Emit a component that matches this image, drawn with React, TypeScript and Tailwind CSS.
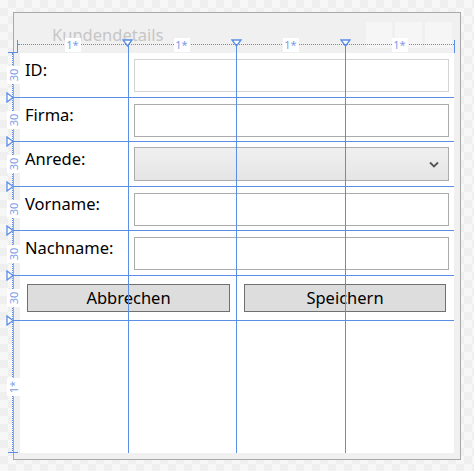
import React from "react";

const rows = ["ID:", "Firma:", "Anrede:", "Vorname:", "Nachname:"];
const blue = "#5b8ee6";

function DownTriangle() {
  return (
    <svg width="11" height="8" viewBox="0 0 11 8">
      <path d="M1 1 H10 L5.5 7 Z" fill="white" stroke={blue} strokeWidth="1.3" />
    </svg>
  );
}

function RightTriangle() {
  return (
    <svg width="8" height="11" viewBox="0 0 8 11">
      <path d="M1 1 V10 L7 5.5 Z" fill="white" stroke={blue} strokeWidth="1.3" />
    </svg>
  );
}

// one "30" or "1*" tag on the left ruler, rotated
function SideTag({ text }: { text: string }) {
  return (
    <div className="w-[18px] h-[14px] bg-white text-[11px] leading-[14px] text-center text-[#7d9ce8] -rotate-90">
      {text}
    </div>
  );
}

export default function App() {
  return (
    <div
      className="relative w-[474px] h-[471px] overflow-hidden bg-[#f7f7f7] bg-[conic-gradient(#efefef_25%,#f7f7f7_0_50%,#efefef_0_75%,#f7f7f7_0)] bg-[length:16px_16px] pl-[13px] pt-[12px]"
      style={{ fontFamily: '"Noto Sans", "Open Sans", sans-serif' }}
    >
      {/* window */}
      <div className="w-[448px] h-[448px] border border-[#a9a9a9] bg-[#f0f0f0] flex flex-col">
        <div className="h-[40px] flex shrink-0">
          <div className="pl-[38px] pt-[12px] text-[16.5px] leading-[20px] text-[#c6c6c6]">Kundendetails</div>
          <div className="ml-auto flex gap-[3px] pr-[8px] pt-[9px]">
            <div className="w-[26px] h-[26px] bg-[#f6f6f6]" />
            <div className="w-[27px] h-[26px] bg-[#f6f6f6]" />
            <div className="w-[27px] h-[26px] bg-[#f6f6f6]" />
          </div>
        </div>
        {/* client area */}
        <div className="ml-[6px] w-[434px] h-[400px] bg-white grid grid-cols-4 grid-rows-[repeat(6,44.6px)_1fr] text-[16.5px] text-black">
          {rows.map((label, i) => (
            <React.Fragment key={label}>
              <div className="col-start-1 pl-[5px] pt-[6px] leading-[22px]" style={{ gridRowStart: i + 1 }}>
                {label}
              </div>
              {label === "Anrede:" ? (
                <div
                  className="col-start-2 col-span-3 ml-[5px] mr-[5px] mt-[5px] h-[34px] border border-[#acacac] bg-gradient-to-b from-[#f0f0f0] to-[#e5e5e5] flex items-center justify-end pr-[9px]"
                  style={{ gridRowStart: i + 1 }}
                >
                  <svg width="10" height="7" viewBox="0 0 10 7">
                    <path d="M1 1.5 L5 5.5 L9 1.5" fill="none" stroke="#555" strokeWidth="1.8" />
                  </svg>
                </div>
              ) : (
                <div
                  className={`col-start-2 col-span-3 ml-[5px] mr-[5px] mt-[6px] h-[33px] border bg-white ${
                    i === 0 ? "border-[#d4d4d4]" : "border-[#ababab]"
                  }`}
                  style={{ gridRowStart: i + 1 }}
                />
              )}
            </React.Fragment>
          ))}
          <div className="row-start-6 col-start-1 col-span-2 ml-[7px] mr-[7px] mt-[8px] h-[28px] border border-[#707070] bg-[#dddddd] flex items-center justify-center leading-none">
            Abbrechen
          </div>
          <div className="row-start-6 col-start-3 col-span-2 ml-[7px] mr-[8px] mt-[8px] h-[28px] border border-[#707070] bg-[#dddddd] flex items-center justify-center leading-none">
            Speichern
          </div>
        </div>
      </div>

      {/* designer overlay: top ruler with column tags */}
      <div className="absolute left-[17px] top-[40px] w-[438px] h-[13px] pointer-events-none flex border-l border-r border-[#5b8ee6]">
        <div className="absolute left-0 right-0 top-[4px] border-t border-dotted border-[#5b8ee6]" />
        {[0, 1, 2, 3].map((c) => (
          <div key={c} className="relative flex-1 flex justify-center">
            <div className="relative -mt-[2px] w-[16px] h-[14px] bg-white text-[11px] leading-[14px] text-center text-[#7d9ce8]">1*</div>
            {c > 0 && (
              <div className="absolute -left-[5px] -top-px">
                <DownTriangle />
              </div>
            )}
          </div>
        ))}
      </div>

      {/* column lines over the client area */}
      <div className="absolute left-[20px] top-[44px] w-[434px] h-[409px] pointer-events-none grid grid-cols-4">
        <div className="border-r border-[#5b8ee6]" />
        <div className="border-r border-[#5b8ee6]" />
        <div className="border-r border-[#5b8ee6]" />
        <div />
      </div>

      {/* row lines and left ruler */}
      <div className="absolute left-[4px] top-[53px] w-[450px] h-[400px] pointer-events-none flex flex-col">
        <div className="absolute left-[8px] top-0 bottom-0 border-l border-dotted border-[#5b8ee6]" />
        <div className="absolute left-[4px] -top-px w-[10px] border-t border-[#5b8ee6]" />
        <div className="absolute left-[4px] bottom-0 w-[10px] border-t border-[#5b8ee6]" />
        {[0, 1, 2, 3, 4, 5].map((r) => (
          <div key={r} className="relative h-[44.6px] shrink-0 flex items-center">
            <div className="absolute left-[9px] right-0 bottom-0 h-px bg-[#5b8ee6]" />
            <div className="pl-[1px]">
              <SideTag text="30" />
            </div>
            <div className="absolute left-[2px] -bottom-[5px]">
              <RightTriangle />
            </div>
          </div>
        ))}
        <div className="flex-1 flex items-center pl-[1px]">
          <SideTag text="1*" />
        </div>
      </div>
    </div>
  );
}
